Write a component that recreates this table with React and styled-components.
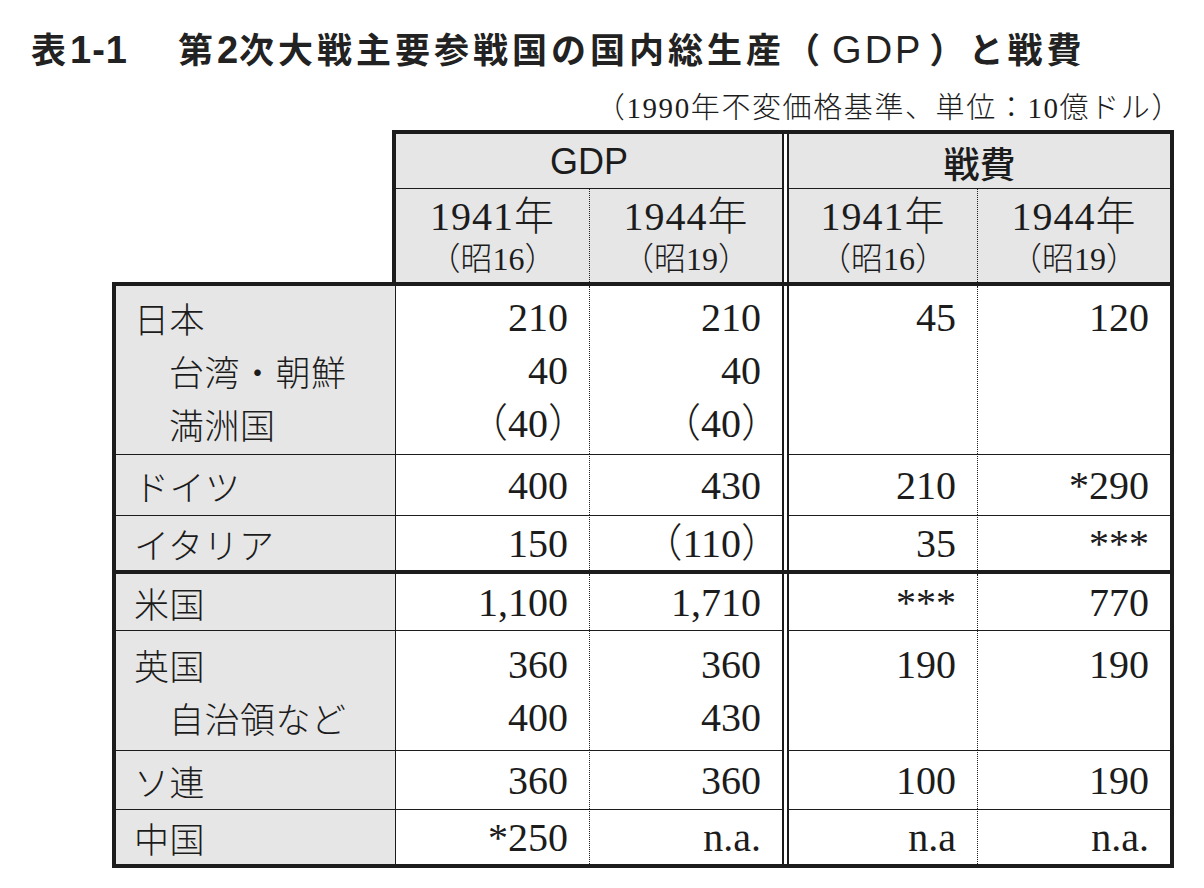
import React from "react";
import styled, { createGlobalStyle, css } from "styled-components";

const GlobalStyle = createGlobalStyle`
	*, *::before, *::after {
		box-sizing: border-box;
	}
	body {
		margin: 0;
		background: #fff;
		color: #1c1c1c;
	}
`;

const INK = "#1c1c1c";
const SHADE = "#e6e6e6";
const COLS = "194px 192px 7px 189px 192px";

const Page = styled.div`
	width: 1204px;
	height: 888px;
	overflow: hidden;
	padding-top: 28px;
`;

const Title = styled.h1`
	margin: 0 0 0 31px;
	font-family: "Noto Sans CJK JP", sans-serif;
	font-weight: 700;
	font-size: 35px;
	line-height: 40px;
	letter-spacing: 4px;
	white-space: nowrap;
	color: #222;
`;

const TitleNo = styled.span`
	margin-right: 50px;
`;

const Latin = styled.span`
	font-family: "Liberation Sans", sans-serif;
	font-size: 38px;
	font-weight: ${(p) => (p.$light ? 400 : 700)};
	letter-spacing: ${(p) => (p.$light ? "3px" : "1px")};
	margin: ${(p) => (p.$light ? "0 6px 0 8px" : "0")};
`;

const Note = styled.div`
	margin-top: 20px;
	padding-right: 22px;
	text-align: right;
	font-family: "Liberation Serif", "Noto Sans CJK JP", serif;
	font-weight: 300;
	font-size: 29px;
	line-height: 36px;
	letter-spacing: 1.6px;
	white-space: nowrap;
`;

const Table = styled.div`
	margin: 4px 0 0 112px;
	width: 1062px;
`;

const Head = styled.div`
	margin-left: 280px;
	border: 4px solid ${INK};
	border-bottom: none;
`;

const HeadRow = styled.div`
	display: grid;
	grid-template-columns: ${COLS};
	height: ${(p) => p.$h}px;
`;

const Divider = styled.div`
	border-left: 2px solid ${INK};
	border-right: 2px solid ${INK};
	background: #fff;
`;

const GroupCell = styled.div`
	grid-column: span 2;
	display: flex;
	align-items: center;
	justify-content: center;
	background: ${SHADE};
	border-bottom: 1px solid ${INK};
	font-family: ${(p) =>
		p.$latin ? `"Liberation Sans", sans-serif` : `"Noto Sans CJK JP", sans-serif`};
	font-weight: ${(p) => (p.$latin ? 400 : 500)};
	font-size: 36px;
	padding-top: 2px;
`;

const YearCell = styled.div`
	display: flex;
	flex-direction: column;
	align-items: center;
	justify-content: center;
	padding-top: 4px;
	background: ${SHADE};
	border-right: ${(p) => (p.$dotted ? `1px dotted #222` : "none")};
	font-family: "Liberation Serif", "Noto Sans CJK JP", serif;
	font-weight: 300;
`;

const Year = styled.div`
	font-size: 40px;
	line-height: 42px;
	letter-spacing: 1px;
`;

const Era = styled.div`
	font-size: 32px;
	line-height: 42px;
	font-feature-settings: "halt";
`;

const Body = styled.div`
	border: 4px solid ${INK};
`;

const Label = styled.div`
	display: flex;
	flex-direction: column;
	justify-content: center;
	padding-left: 18px;
	background: ${SHADE};
	border-right: 1px solid ${INK};
	font-family: "Noto Sans CJK JP", sans-serif;
	font-weight: 300;
	font-size: 35px;
	letter-spacing: 0.5px;
`;

const Num = styled.div`
	display: flex;
	flex-direction: column;
	justify-content: center;
	padding-right: 21px;
	text-align: right;
	border-right: ${(p) => (p.$dotted ? `1px dotted #222` : "none")};
	font-family: "Liberation Serif", "Noto Sans CJK JP", serif;
	font-weight: 300;
	font-size: 40px;
	font-feature-settings: "halt";
`;

const Line = styled.div`
	height: 53px;
	line-height: 53px;
	white-space: nowrap;
	padding-left: ${(p) => (p.$indent ? "35px" : "0")};
`;

const Row = styled.div`
	display: grid;
	grid-template-columns: 280px ${COLS};
	height: ${(p) => p.$h}px;
	${(p) =>
		p.$sep === "thick" &&
		css`
			border-top: 4px solid ${INK};
		`}
	${(p) =>
		p.$sep === "thin" &&
		css`
			& > ${Label}, & > ${Num} {
				border-top: 1px solid ${INK};
			}
		`}
`;

const rows = [
	{
		h: 168,
		sep: "none",
		labels: [["日本"], ["台湾・朝鮮", true], ["満洲国", true]],
		gdp41: ["210", "40", "（40）"],
		gdp44: ["210", "40", "（40）"],
		war41: ["45", "", ""],
		war44: ["120", "", ""],
	},
	{ h: 61, sep: "thin", labels: [["ドイツ"]], gdp41: ["400"], gdp44: ["430"], war41: ["210"], war44: ["*290"] },
	{ h: 55, sep: "thin", labels: [["イタリア"]], gdp41: ["150"], gdp44: ["（110）"], war41: ["35"], war44: ["***"] },
	{ h: 60, sep: "thick", labels: [["米国"]], gdp41: ["1,100"], gdp44: ["1,710"], war41: ["***"], war44: ["770"] },
	{
		h: 120,
		sep: "thin",
		labels: [["英国"], ["自治領など", true]],
		gdp41: ["360", "400"],
		gdp44: ["360", "430"],
		war41: ["190", ""],
		war44: ["190", ""],
	},
	{ h: 59, sep: "thin", labels: [["ソ連"]], gdp41: ["360"], gdp44: ["360"], war41: ["100"], war44: ["190"] },
	{ h: 55, sep: "thin", labels: [["中国"]], gdp41: ["*250"], gdp44: ["n.a."], war41: ["n.a"], war44: ["n.a."] },
];

const years = [
	["1941年", "（昭16）"],
	["1944年", "（昭19）"],
];

const Lines = ({ items }) => items.map((v, i) => <Line key={i}>{v || "\u00a0"}</Line>);

export default function App() {
	return (
		<Page>
			<GlobalStyle />
			<Title>
				<TitleNo>
					表<Latin>1-1</Latin>
				</TitleNo>
				第<Latin>2</Latin>次大戦主要参戦国の国内総生産（<Latin $light>GDP</Latin>）と戦費
			</Title>
			<Note>（1990年不変価格基準、単位：10億ドル）</Note>
			<Table>
				<Head>
					<HeadRow $h={55}>
						<GroupCell $latin>GDP</GroupCell>
						<Divider />
						<GroupCell>戦費</GroupCell>
					</HeadRow>
					<HeadRow $h={93}>
						{years.map(([y, e], i) => (
							<YearCell key={"g" + i} $dotted={i === 0}>
								<Year>{y}</Year>
								<Era>{e}</Era>
							</YearCell>
						))}
						<Divider />
						{years.map(([y, e], i) => (
							<YearCell key={"w" + i} $dotted={i === 0}>
								<Year>{y}</Year>
								<Era>{e}</Era>
							</YearCell>
						))}
					</HeadRow>
				</Head>
				<Body>
					{rows.map((r, i) => (
						<Row key={i} $h={r.h} $sep={r.sep}>
							<Label>
								{r.labels.map(([t, indent], j) => (
									<Line key={j} $indent={indent}>
										{t}
									</Line>
								))}
							</Label>
							<Num $dotted>
								<Lines items={r.gdp41} />
							</Num>
							<Num>
								<Lines items={r.gdp44} />
							</Num>
							<Divider />
							<Num $dotted>
								<Lines items={r.war41} />
							</Num>
							<Num>
								<Lines items={r.war44} />
							</Num>
						</Row>
					))}
				</Body>
			</Table>
		</Page>
	);
}
